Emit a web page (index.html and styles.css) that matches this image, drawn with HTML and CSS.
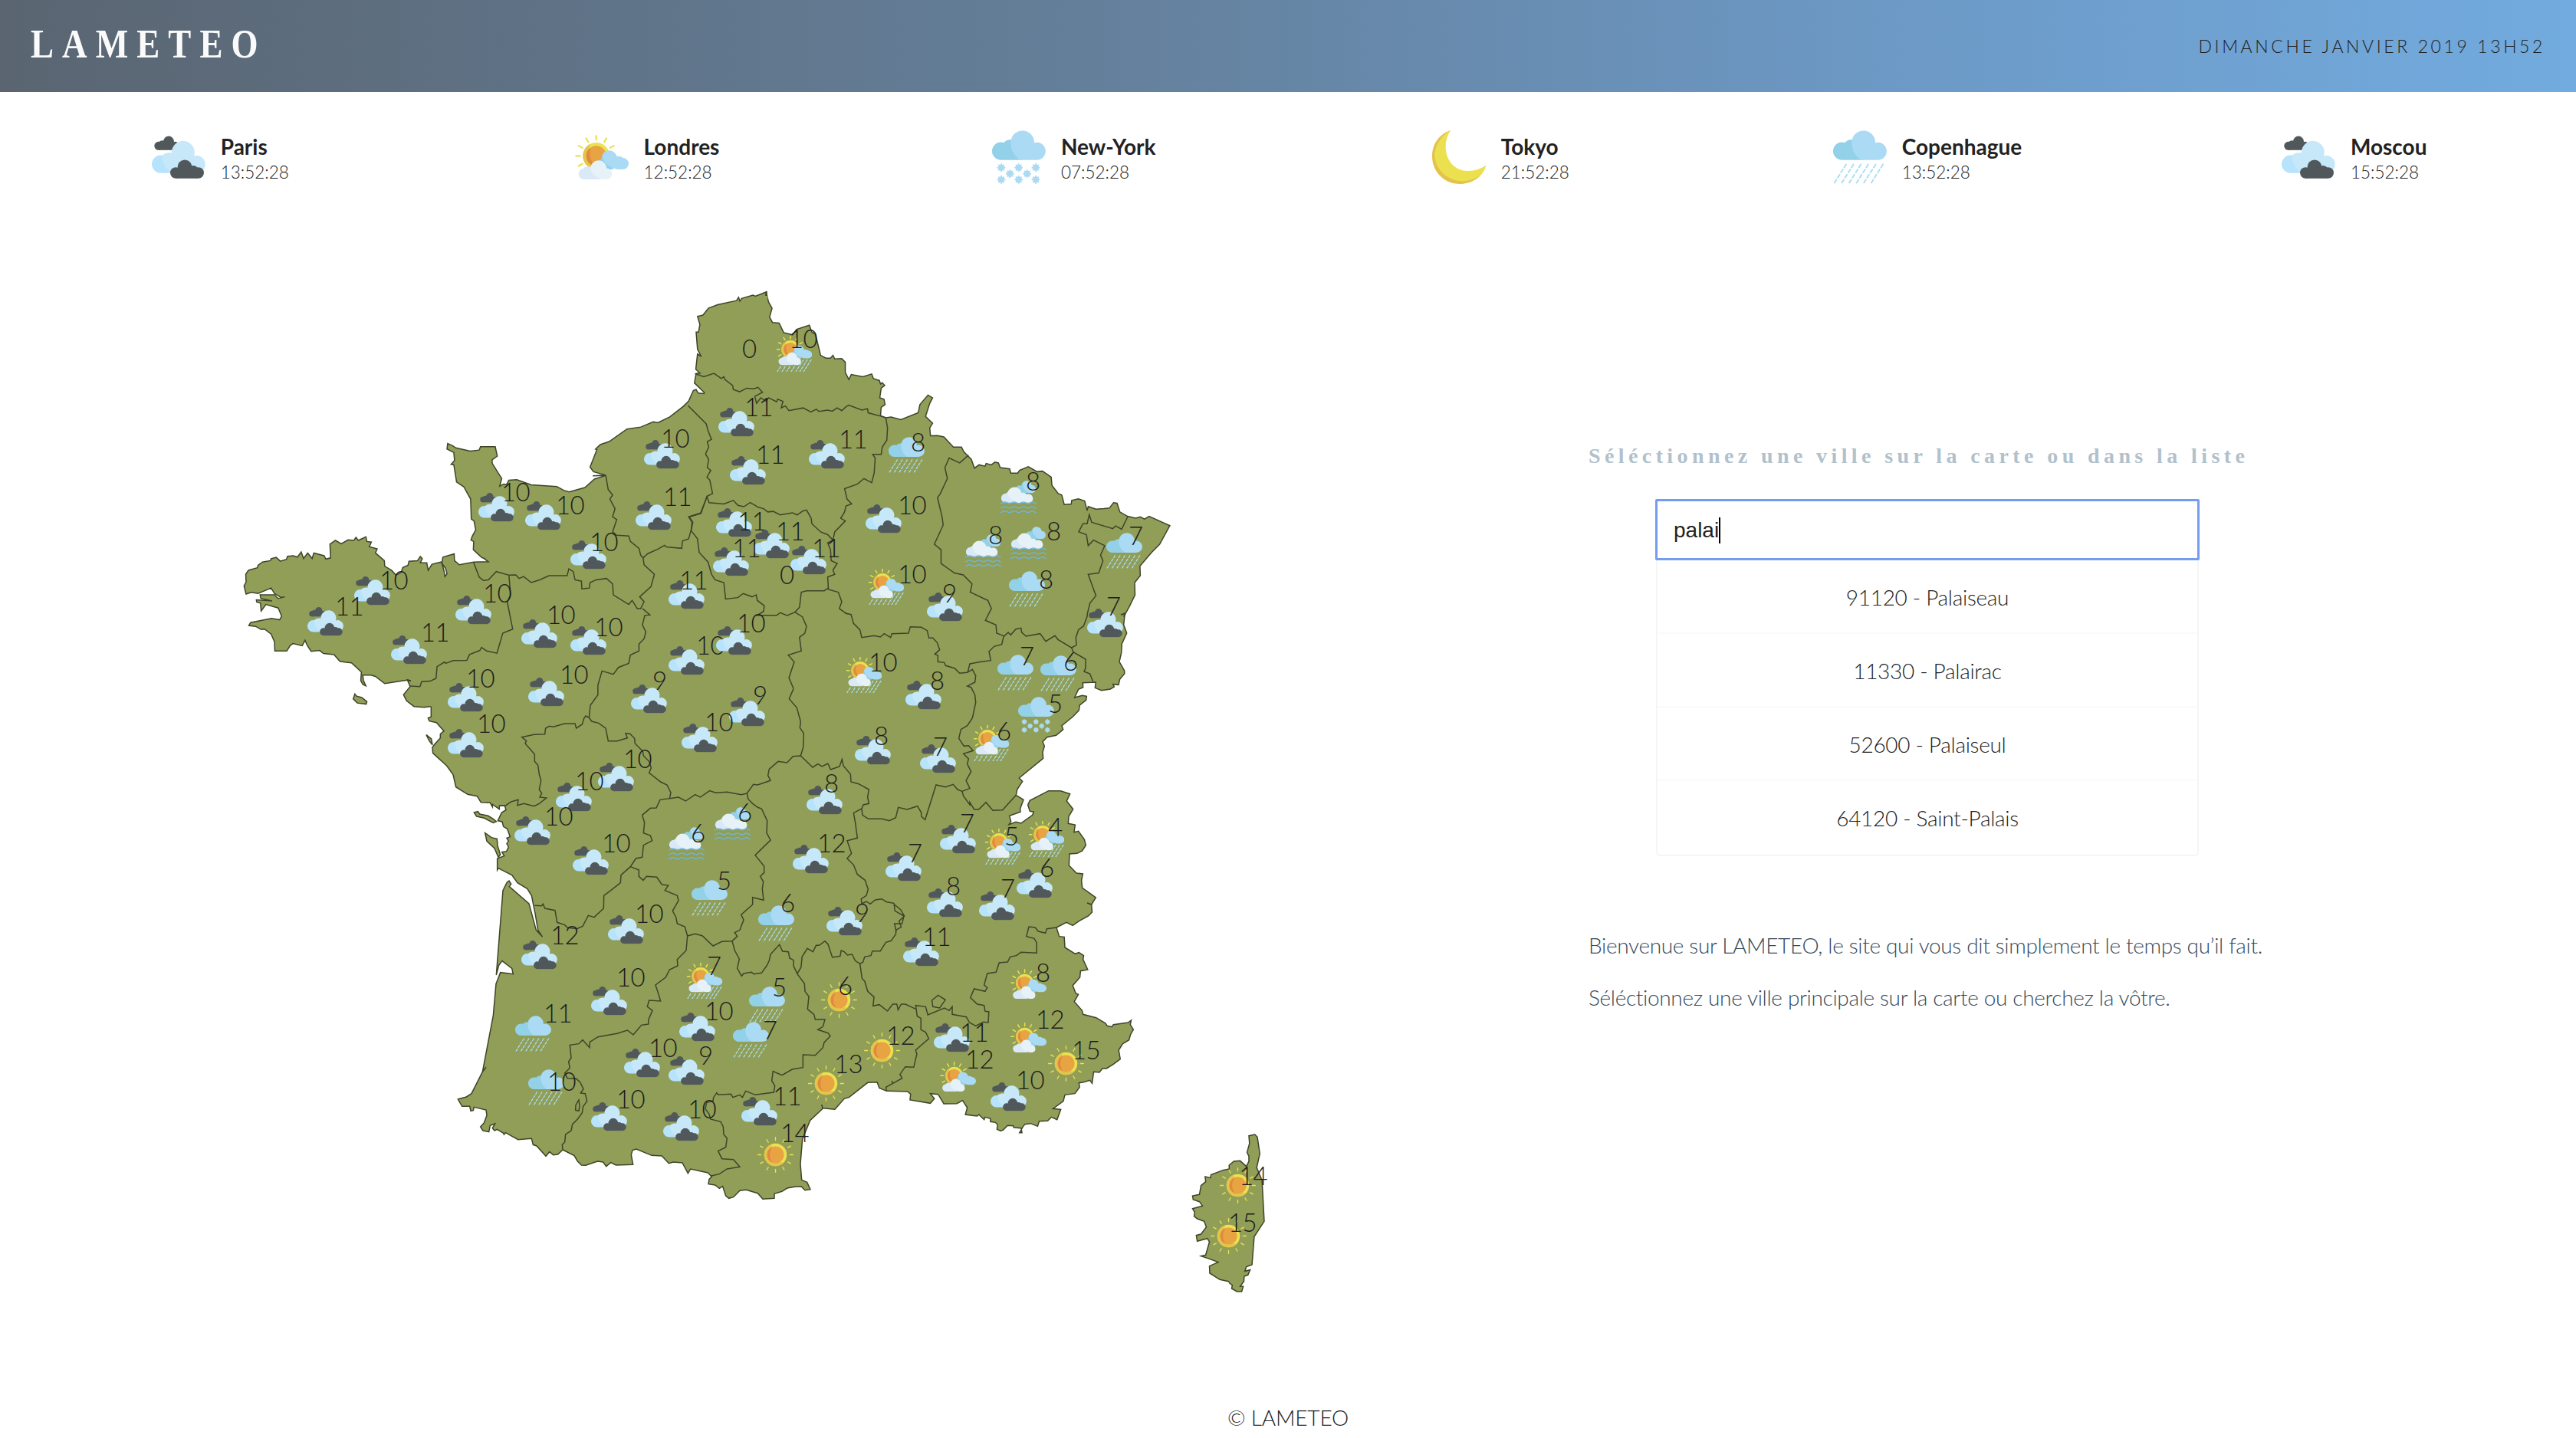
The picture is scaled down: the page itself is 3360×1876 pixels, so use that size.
FILE: index.html
```html
<!DOCTYPE html>
<html lang="fr">
<head>
<meta charset="utf-8">
<title>LAMETEO</title>
<link rel="stylesheet" href="styles.css">
</head>
<body>
<svg class="sprite" aria-hidden="true">
  <symbol id="clouds" viewBox="0 0 70 70">
    <g fill="#51585b"><circle cx="22" cy="14.6" r="7"/><circle cx="8.8" cy="20.3" r="5.5"/><circle cx="13.5" cy="18.5" r="5.3"/><circle cx="30.5" cy="20.3" r="5.5"/><path d="M8.8 17H30v8.8H8.8z"/></g>
    <path fill="#b7e3fd" d="M11.5 32.6c3 0 8 2 12 6L28 55.7H11.5a11.5 11.5 0 0 1 0-23.1z"/>
    <path fill="#c6e8f9" d="M13.3 33C16 30 21 28.4 26 29.5A14.9 14.9 0 1 1 55 33.400A11.4 11.4 0 1 1 58.500 55.700H25.500C18 50 13.500 42 13.300 33Z"/>
    <g fill="#51585b"><circle cx="43" cy="47.8" r="9.4"/><circle cx="31.300" cy="55.500" r="7.300"/><circle cx="54" cy="53" r="7"/><circle cx="60.700" cy="55.500" r="7.300"/><path d="M31.300 50H60v12.800H31.300z"/></g>
  </symbol>
  <symbol id="bluecloud" viewBox="0 0 70 70">
    <path fill="#93d1e9" d="M11.500 15.500c1.500 0 3 .2 4 .6C18 12.500 22 11.500 26 12.500L40 38.700H11.500a11.600 11.600 0 0 1 0-23.200z"/>
    <path fill="#abdbf4" d="M24.400 15.300A15.300 15.300 0 1 1 55 16.200A11.500 11.500 0 1 1 58.400 38.700H36.500C28 33 24.400 25 24.400 15.300Z"/>
  </symbol>
  <symbol id="rain" viewBox="0 0 70 70">
    <use href="#bluecloud"/>
    <path class="drops" d="M17 44.500L1.500 69M26.600 44.500L11.100 69M36.200 44.500L20.700 69M45.800 44.500L30.300 69M55.400 44.500L39.900 69M65 44.500L49.500 69"/>
  </symbol>
  <symbol id="flake" viewBox="-6 -6 12 12"><circle r="3.900"/><path stroke="#abdbf4" stroke-width="1.900" d="M0-5.400V5.400M-5.400 0H5.400M-3.700-3.700L3.700 3.700M3.700-3.700L-3.700 3.700"/></symbol>
  <symbol id="snow" viewBox="0 0 70 70">
    <use href="#bluecloud"/>
    <g fill="#abdbf4"><use href="#flake" x="6" y="42.700" width="12" height="12"/><use href="#flake" x="28.700" y="42.700" width="12" height="12"/><use href="#flake" x="51" y="42.700" width="12" height="12"/><use href="#flake" x="17.300" y="50.700" width="12" height="12"/><use href="#flake" x="39.700" y="50.700" width="12" height="12"/><use href="#flake" x="6" y="58.300" width="12" height="12"/><use href="#flake" x="28.700" y="58.300" width="12" height="12"/><use href="#flake" x="51" y="58.300" width="12" height="12"/></g>
  </symbol>
  <symbol id="partsun" viewBox="0 0 70 70">
    <path stroke="#ebe151" stroke-width="2.200" stroke-linecap="round" d="M27.700 7v5.500M1.300 33.300h5.500M14.500 10.400l2.800 4.800M40.900 10.400l-2.800 4.800M4.800 20.100l4.800 2.800M50.600 20.100l-4.800 2.800M4.800 46.500l4.800-2.800"/>
    <circle cx="27.700" cy="33.300" r="17.300" fill="#ebe151"/>
    <path fill="#e3c54a" d="M20 17.800a17.300 17.300 0 0 0 9 32.800C18 44 14 30 20 17.800z"/>
    <circle cx="27.700" cy="33.300" r="13" fill="#e8a343"/>
    <path fill="#e08a40" d="M20.500 22.500A13 13 0 0 0 26 46.200C20 40 17.500 31 20.500 22.500z"/>
    <path fill="#93d1e9" d="M36 31.500a10 10 0 0 1 6-5L50 51H36c-8 0-8-12-2-13z"/>
    <path fill="#abdbf4" d="M35.500 33A9.900 9.900 0 0 1 54.500 34C58 33.400 61 34.500 62.500 36A7.500 7.500 0 0 1 62.500 51H55C44 48 36 42 35.500 33Z"/>
    <path fill="#d9e9f7" d="M11.700 49.700c.7-2.300 5-3.400 9-2L34 64H12a7.100 7.100 0 0 1-.3-14.300z"/>
    <path fill="#e6f1f8" d="M20.200 50A10.500 10.500 0 0 1 41.200 49.600A7.300 7.300 0 0 1 42.700 64H37C27 62 21 57 20.200 50Z"/>
  </symbol>
  <symbol id="sunrain" viewBox="0 0 70 70">
    <use href="#partsun" x="-1" y="-7" width="70" height="70"/>
    <path class="drops" d="M7.500 60L1.500 69.500M16.500 60L10.500 69.500M25.500 60L19.500 69.500M34.500 60L28.500 69.500M52 46.800L37.500 69.500M59.500 46.800L45 69.500M67 46.800L52.500 69.500"/>
  </symbol>
  <symbol id="fog" viewBox="0 0 70 70">
    <path fill="#93d1e9" d="M30 16c0-6 7-8 10-6 2-5 5-8 9-9.500L60 24H36z"/>
    <path fill="#abdbf4" d="M43 5A9.500 9.500 0 0 1 60.500 8.500A7.700 7.700 0 0 1 61 24H56C48 20 43 14 43 5Z"/>
    <path fill="#d9e9f7" d="M10.500 25c2-3 6-3 9-2L44 43H10a9 9 0 0 1 .5-18z"/>
    <path fill="#e6f1f8" d="M13.500 24A14 14 0 0 1 41 24C45 22.500 49 24 50 26.500C58 24.500 63 29 63 35C63 40 59 43 55 43H34C23 40 15 34 13.500 24Z"/>
    <path fill="none" stroke="#6fb6dd" stroke-width="2" d="M0 44.500c3 0 5-3 8.500-3s5.500 3 9 3 5.500-3 9-3 5.500 3 9 3 5.500-3 9-3 5.500 3 9 3 5.500-3 8.500-3 4 3 7.500 3M0 53.500c3 0 5-3 8.500-3s5.500 3 9 3 5.500-3 9-3 5.500 3 9 3 5.500-3 9-3 5.500 3 9 3 5.500-3 8.500-3 4 3 7.500 3M0 62c3 0 5-3 8.500-3s5.500 3 9 3 5.500-3 9-3 5.500 3 9 3 5.500-3 9-3 5.500 3 9 3 5.500-3 8.500-3 4 3 7.500 3"/>
  </symbol>
  <symbol id="sun" viewBox="0 0 70 70">
    <path stroke="#ebe151" stroke-width="2" stroke-linecap="round" d="M35 1v6M35 63v6M1 35h6M63 35h6M18 5.600l3 5.200M49 59.200l3 5.200M5.600 18l5.200 3M59.200 49l5.200 3M5.600 52l5.200-3M59.200 21l5.200-3M18 64.400l3-5.200M49 10.800l3-5.200"/>
    <circle cx="35" cy="35" r="22" fill="#ebe151"/>
    <path fill="#e3c54a" d="M28 14.200A22 22 0 1 0 52 49C40 53 24 42 28 14.200z"/>
    <circle cx="35" cy="35" r="16.500" fill="#e8a343"/>
    <path fill="#e08a40" d="M29 19.700a16.500 16.500 0 0 0 0 30.600C22.500 41 22.500 29 29 19.700z"/>
  </symbol>
  <symbol id="moon" viewBox="0 0 70 70">
    <path fill="#e4c34b" d="M24 0C9 5 0 18 0 34C0 54 16 70 36 70C52 70 66 61 70 46C40 66 10 50 8 20z"/>
    <path fill="#ebe14f" d="M24 0C13 6 3 20 3.500 34C6 58 28 68 44 66C58 64 68 57 70 46C64 50 56 53 47 53C20 53 10 22 24 0Z"/>
  </symbol>
</svg>

<header class="topbar">
  <h1 class="logo">LAMETEO</h1>
  <time class="date">DIMANCHE JANVIER 2019 13H52</time>
</header>

<section class="cities">
  <div class="city"><svg class="city-icon"><use href="#clouds"/></svg><div><div class="city-name">Paris</div><div class="city-time">13:52:28</div></div></div>
  <div class="city"><svg class="city-icon"><use href="#partsun"/></svg><div><div class="city-name">Londres</div><div class="city-time">12:52:28</div></div></div>
  <div class="city"><svg class="city-icon"><use href="#snow"/></svg><div><div class="city-name">New-York</div><div class="city-time">07:52:28</div></div></div>
  <div class="city"><svg class="city-icon"><use href="#moon"/></svg><div><div class="city-name">Tokyo</div><div class="city-time">21:52:28</div></div></div>
  <div class="city"><svg class="city-icon"><use href="#rain"/></svg><div><div class="city-name">Copenhague</div><div class="city-time">13:52:28</div></div></div>
  <div class="city"><svg class="city-icon"><use href="#clouds"/></svg><div><div class="city-name">Moscou</div><div class="city-time">15:52:28</div></div></div>
</section>

<main class="content">
  <svg class="map" viewBox="0 280 1680 1530">
    <g class="land">
      <path transform="matrix(.4464 0 0 .35714 300 360)" d="M518 1476L452 1489 425 1463 412 1458 388 1458 390 1478 397 1497 388 1492 382 1478 384 1447 355 1413 339 1411 321 1408 304 1383 273 1379 262 1368 237 1371 226 1350 219 1331 211 1351 184 1343 176 1350 166 1370 131 1370 130 1336 120 1308 101 1290 90 1291 75 1280 55 1277 60 1266 121 1251 145 1256 151 1243 141 1213 105 1200 91 1224 89 1195 78 1191 77 1183 123 1187 90 1178 88 1165 130 1165 140 1178 160 1172 150 1175 130 1160 120 1140 82 1160 62 1156 47 1162 41 1132 47 1118 46 1090 54 1075 80 1066 82 1057 95 1045 118 1040 120 1033 135 1028 147 1042 165 1035 168 1024 185 1022 197 1027 208 1008 215 1032 227 1012 240 1032 245 1012 275 1022 280 1034 294 1030 292 980 308 966 325 978 345 964 362 966 368 955 375 966 397 953 400 970 413 972 407 989 430 997 425 1012 451 1040 452 1060 472 1075 485 1093 500 1083 505 1065 520 1057 523 1042 548 1040 556 1025 562 1033 556 1048 575 1048 579 1075 590 1053 617 1045 620 1053 625 1075 628 1098 634 1088 630 1068 619 1050 622 1027 655 1015 656 1040 670 1055 712 1045 755 1044 740 1030 747 1035 735 1028 711 1000 712 970 704 965 708 950 718 928 713 895 705 888 703 815 683 770 662 753 654 690 646 688 656 674 654 645 634 632 636 612 650 620 660 628 702 640 728 636 732 624 775 624 781 658 766 672 766 684 794 740 788 768 800 760 808 762 815 746 838 744 880 763 955 769 975 783 991 789 1037 773 1065 742 1098 729 1060 730 1098 728 1062 715 1052 698 1072 635 1068 633 1082 616 1108 605 1160 559 1200 552 1237 533 1250 536 1285 515 1324 477 1340 457 1354 418 1362 415 1368 428 1385 430 1386 426 1357 391 1362 356 1373 355 1361 341 1366 285 1377 294 1366 268 1362 205 1369 205 1373 177 1366 148 1382 143 1398 118 1425 105 1480 90 1486 78 1490 92 1495 82 1528 70 1535 74 1568 58 1456 1792Z"/>
      <path transform="matrix(.33333 0 0 .33333 560 860)" d="M-86 81L-75 107-101 139-89 163-60 185-20 188 2 185 7 187 7 226-5 230 0 242 28 248 57 281 43 293 43 308 20 334 12 345 14 368 68 417 93 452 104 500 150 529 187 536 202 560 238 562 247 578 247 568 274 587 274 573 295 573 300 590 283 600 268 632 285 636 290 655 305 664 316 695 303 700 310 712 303 722 310 735 302 752 284 755 293 770 266 780 266 825 270 818 323 845 345 875 383 898 400 925 415 1000 425 1060 443 1087 418 1060 390 957 313 890 320 880 312 867 304 873 288 905 262 1236 272 1198 285 1181 323 1210 328 1232 278 1226 272 1242 261 1270 250 1395 208 1615 1170 420Z"/>
      <path transform="matrix(.33333 0 0 .33333 560 1180)" d="M208 655L165 740 145 753 112 762 128 790 158 790 162 808 172 806 175 793 222 804 225 825 214 855 200 870 210 885 233 890 238 865 257 858 247 875 255 885 265 880 290 895 292 900 298 893 347 920 400 916 406 940 420 945 456 985 470 968 485 980 503 978 522 960 567 983 580 1005 595 1020 612 1021 658 1005 680 1008 692 1025 710 1010 730 1020 797 1018 790 980 795 962 810 957 870 982 910 984 937 1013 955 1008 990 1011 1012 1052 1022 1035 1090 1050 1105 1065 1095 1075 1092 1094 1118 1098 1135 1111 1148 1103 1160 1140 1172 1150 1190 1145 1215 1120 1240 1117 1285 1130 1305 1153 1350 1150 1350 1132 1380 1123 1400 1110 1430 1105 1455 1103 1470 1118 1491 1115 1478 1087 1457 1078 1452 1015 1460 918 1490 845 1540 798 1170-540Z"/>
      <path transform="matrix(.40816 0 0 .33333 1040 1180)" d="M81 797L120 802 150 760 165 755 225 697 255 695 262 718 285 730 352 732 362 742 360 765 425 778 438 760 425 740 450 743 468 780 510 779 528 767 543 795 537 822 575 828 580 822 597 842 600 832 617 838 617 850 633 853 640 862 638 880 650 886 658 882 672 865 690 866 692 873 715 875 718 893 710 893 720 872 727 860 745 857 768 868 773 848 800 847 812 832 830 842 842 802 817 799 850 770 855 745 887 740 902 715 900 698 915 695 935 688 942 700 947 655 965 657 975 642 988 642 1010 625 1032 605 1027 570 1040 545 1060 530 1065 508 1074 490 1064 470 1067 453 1057 462 1010 470 1005 479 990 475 985 465 955 443 913 430 910 415 885 380 898 352 890 348 880 317 903 285 905 260 928 255 913 215 915 200 900 188 888 193 855 168 853 127 837 125 828 90 860 70 880 82 900 65 930 45 942 30 940 0-220-540Z"/>
      <path transform="matrix(.33333 0 0 .33333 1050 800)" d="M1121 1140L1138 1113 1120 1100 1085 1075 1082 1045 1087 1020 1062 1017 1033 987 1035 942 1065 940 1085 930 1099 908 1093 885 1070 853 1053 857 1057 828 1030 823 1032 795 1049 767 1024 735 1037 707 1000 695 953 695 880 733 872 750 880 775 895 777 890 790 845 822 825 817 798 827 806 815 800 793 843 778 842 765 855 730 826 712 830 690 851 658 838 645 932 568 930 545 937 520 930 503 947 485 983 478 1010 455 1005 440 1048 405 1072 380 1075 360 1100 340 1102 325 1085 322 1055 330 1070 298 1088 290 1087 272 1138 270 1135 292 1160 302 1195 297 1210 288 1205 278 1227 280 1232 258 1250 237 1250 225 1230 190 1238 155 1240 120 1259 78 1247 45 1252 0-300 600Z"/>
      <path transform="matrix(.45918 0 0 .35714 850 360)" d="M1344 1232L1341 1245 1358 1205 1373 1165 1372 1120 1388 1095 1387 1060 1420 1010 1443 980 1472 912 1413 878 1400 888 1388 880 1375 885 1352 878 1330 862 1322 830 1312 828 1300 848 1285 850 1262 852 1240 842 1237 857 1230 822 1212 814 1193 820 1192 833 1172 835 1165 800 1155 795 1137 765 1135 735 1110 713 1095 715 1070 697 1045 710 1040 720 1020 720 1017 705 990 700 985 683 975 680 965 690 950 685 947 695 930 690 917 702 908 670 887 643 880 625 857 625 830 588 812 583 792 584 790 555 798 538 778 513 790 465 798 445 785 435 762 470 757 500 708 525 680 515 665 518 650 510 652 480 663 470 660 450 648 445 652 410 662 400 655 390 650 395 647 382 630 375 625 358 600 368 567 360 560 378 550 352 550 315 540 302 520 303 515 290 508 300 495 300 480 290 470 238 465 213 455 205 448 180 412 195 400 215 375 207 362 172 343 170 335 150 342 118 332 95 325 58 218 1792Z"/>
      <path transform="matrix(.40816 0 0 .33333 1040 1180)" d="M1443 905L1462 900 1470 910 1478 975 1468 1030 1485 1080 1492 1240 1460 1300 1453 1410 1435 1418 1430 1435 1447 1430 1440 1450 1428 1455 1427 1475 1415 1495 1425 1495 1420 1515 1405 1515 1388 1503 1390 1490 1382 1483 1378 1475 1350 1468 1318 1443 1317 1415 1345 1400 1312 1385 1290 1376 1305 1372 1317 1320 1310 1307 1278 1318 1275 1295 1290 1290 1307 1262 1300 1240 1278 1230 1268 1220 1270 1205 1263 1190 1295 1180 1285 1163 1265 1155 1263 1140 1285 1135 1290 1100 1305 1085 1303 1065 1320 1070 1322 1058 1360 1040 1380 1035 1380 1020 1395 1005 1415 1003 1435 1025 1443 1005 1443 985 1437 970 1445 935Z"/>
      <path transform="matrix(.33333 0 0 .33333 560 860)" d="M175 600L190 596 197 606 230 613 250 625 262 635 250 640 215 622 185 615ZM218 680L243 698 265 703 267 730 278 765 270 775 255 740 225 712ZM-12 296L8 312 12 335 0 320Z"/>
      <path transform="matrix(.4464 0 0 .35714 300 360)" d="M365 1527L370 1535 385 1540 400 1555 398 1564 372 1560 360 1545Z"/>
    </g>
    <path class="seams" d="M536 888L950 1000M635 1393L950 1000 1072 1441M1418 1178L950 1000 1462 802M999 386L950 1000"/>
    <g class="borders">
      <g transform="matrix(.45918 0 0 .35714 850 360)">
        <path d="M123 357L148 368 177 356 198 375 205 368 208 378 230 400 232 415 250 423 270 410 290 412 302 407 315 425 293 440 298 465 310 445 325 458 332 445 355 460 358 450 373 458 368 482 380 475 390 492 430 482 452 497 468 487 475 495 500 490 513 494 527 482 540 492 552 478 560 472 597 490 613 485 615 500 650 512"/>
        <path d="M103 473L155 540 160 565 170 597 158 605 162 625 153 650 162 670 158 700 168 710 157 735 165 745 173 795 157 805 163 828 205 833 232 820 245 838 262 843 280 828 303 845 318 850 330 862 345 860 365 873 400 865 413 873 430 858 440 855 453 885 455 905 480 935 500 945 515 965"/>
        <path d="M650 512L665 518 670 555 668 600 655 625 652 652 628 652 635 665 632 720 625 755 603 740 585 760 548 777 555 815 568 833 552 840 548 862 537 885 550 895 520 935 515 965 500 975 508 1000 510 1040 527 1050 515 1075 520 1090 500 1100 502 1145 530 1155 540 1190 533 1215 555 1235"/>
        <path d="M157 805L140 868 107 880 117 900 112 930 130 960 135 1010 160 1045 170 1090 180 1110 205 1120 210 1180 245 1175 260 1160 285 1172 297 1165 300 1185 320 1205 318 1225 300 1240 355 1240 365 1230 385 1240 407 1228 420 1210 425 1155 440 1150 490 1150 502 1140"/>
        <path d="M407 1228L428 1245 440 1280 435 1305 420 1320 425 1370 388 1385 405 1410 390 1468 403 1508"/>
        <path d="M900 655L875 683 845 665 833 700 840 740 820 795 812 810 825 880 828 910 803 980 822 1000 822 1050 860 1085 885 1092 910 1125 905 1155 955 1185 965 1215 948 1258 978 1275 980 1305 1000 1315"/>
        <path d="M1238 1232L1245 1195 1262 1168 1240 1090 1270 1085 1282 1040 1275 1020 1287 985 1255 965 1240 985 1235 945 1213 935 1225 905 1237 905 1243 872 1250 900 1310 923 1318 913 1335 925 1352 880"/>
      </g>
      <g transform="matrix(.4464 0 0 .35714 300 360)">
        <path d="M1348 925L1340 960 1322 968 1320 995 1275 990 1270 984 1250 998 1220 1015 1207 1030M1392 812L1375 866 1340 880 1350 900 1348 925"/>
        <path d="M1098 729L1105 780 1118 800 1110 815 1125 850 1118 880 1130 890 1118 935 1130 947 1165 950 1170 970 1195 995 1200 1020 1207 1030 1210 1055 1240 1090 1230 1135 1197 1172 1210 1190 1200 1215 1190 1215 1175 1185 1165 1200 1120 1165 1118 1125 1100 1105 1070 1110 1052 1120 1050 1140 1028 1143 1027 1115 1008 1110 1003 1080 990 1070 985 1095 932 1095 905 1110 880 1120 858 1098 845 1105 835 1092 815 1093 778 1080 755 1110 740 1112 728 1100 712 1047"/>
        <path d="M815 1093L820 1165 810 1190 826 1290 797 1305 780 1378 750 1370 735 1357 730 1368 700 1383 692 1404 652 1405 630 1415 627 1410 605 1427 602 1470 585 1480 560 1482 555 1500 525 1498"/>
        <path d="M1205 1215L1227 1238 1212 1240 1205 1275 1215 1300 1210 1325 1195 1345 1195 1370 1170 1385 1165 1415 1135 1430 1120 1455 1087 1443 1075 1495 1075 1530 1053 1568 1049 1616"/>
      </g>
      <g transform="matrix(.33333 0 0 .33333 560 860)">
        <path d="M625 228L612 222 605 232 598 255 575 270 570 252 530 252 485 265 470 262 455 270 452 293 410 295 362 305 380 320 375 330 412 372 412 400 425 415 430 450 437 475 430 510 440 525 432 540 458 543 430 565 410 575 370 565 345 572 348 550 320 558 300 572 275 573"/>
        <path d="M625 228L635 243 662 250 690 270 700 320 735 320 775 308 768 290 785 292 803 310 805 330 835 360 838 378 860 400 868 425 860 445 905 480 930 492 945 522 940 545 903 550 888 582 865 583 833 610 842 640 838 680 865 690 872 710 838 728 833 775 808 780 787 812 750 845 748 875 710 905 683 925 682 975 645 1010 622 1003 600 1045 577 1055 540 1050 530 1040 500 1030 492 983 452 975 445 958 440 965 413 964"/>
        <path d="M940 545L975 540 1003 555 1040 530 1060 540 1097 515 1120 523 1165 520 1220 530 1243 525 1268 490 1285 492 1335 475 1325 455 1330 430 1365 400 1400 405 1423 380 1453 378 1500 423 1520 410 1537 420 1560 408"/>
        <path d="M1425 116L1408 155 1438 190 1453 245 1450 268 1465 290 1463 345 1453 378"/>
        <path d="M787 812L820 825 820 850 837 865 850 850 890 853 910 882 935 885 922 905 970 925 975 945 952 985 965 1010 970 1035 1000 1047 1010 1083 1040 1075 1068 1082 1110 1122 1145 1105 1185 1103 1205 1085 1195 1070 1215 1060 1230 1020 1220 1000 1265 960 1265 932 1308 943 1303 900 1307 870 1295 850 1310 835 1310 810 1275 767 1335 708 1320 680 1322 632 1300 585 1285 580 1265 565 1248 548 1243 525"/>
      </g>
      <g transform="matrix(.33333 0 0 .33333 560 1180)">
        <path d="M1010 123L1005 180 970 215 972 240 940 255 925 285 885 315 895 345 905 378 860 375 853 400 873 415 858 450 857 468 830 472 798 510 775 492 735 505 660 518 628 538 627 560 600 530 585 545 550 550 555 600 545 615 550 640 530 660 540 680 575 682 590 695 603 722 592 738 610 740 617 770 602 790 598 815 580 840 560 860 555 885 533 900 530 930 520 940 522 960M585 765L573 785 572 805 585 808 588 788Z"/>
        <path d="M1185 143L1195 180 1213 213 1205 250 1222 280 1230 270 1260 265 1270 272 1300 268 1320 240 1330 220 1335 195 1370 157 1382 183 1405 185 1410 210 1425 218 1425 240 1440 272 1468 310 1470 340 1485 360 1480 410 1505 430 1510 450 1548 450 1540 478 1520 490 1560 503 1569 515 1545 540 1540 560 1510 590 1462 588 1462 638 1420 645 1380 668 1345 653 1340 690 1352 710 1348 735 1275 745 1238 730 1225 755 1215 745 1188 755 1180 742 1130 745 1125 737 1112 755 1110 770 1085 775 1080 800 1095 820 1100 840 1140 850 1150 870 1152 900 1165 915 1160 950 1130 965 1145 995 1190 998 1215 1027 1165 1035 1135 1055 1100 1063"/>
      </g>
      <g transform="matrix(.40816 0 0 .33333 1040 1180)">
        <path d="M0 270L12 245 15 205 32 172 50 185 60 160 70 160 88 143 98 155 112 207 137 202 140 180 150 185 160 198 175 195 185 220 200 232 210 225 215 205 235 200 240 182 265 182 283 148 300 142 315 115 315 100 332 88 325 65 342 45 330 20 310 0"/>
        <path d="M200 232L207 290 215 300 225 340 245 362 242 397 262 392 288 417 305 390 318 390 322 412 332 390 345 390 380 410 383 437 395 445 395 490 410 500 420 525 378 570 382 585 372 637 345 635 328 665 335 680 283 715 285 730M302 690L305 700"/>
        <path d="M380 410L378 395 410 400 417 432 470 405 485 415 495 400 495 430 540 440 550 462 570 475 595 460 610 462 612 420 600 418 597 395 575 390 553 365 565 330 600 340 607 325 597 315 607 270 635 265 645 228 672 225 680 205 700 200 715 187 765 190 765 150 757 133 732 125 740 87 760 90 770 105 793 112 797 95 828 90M430 375L450 355 473 373 455 405 433 400Z"/>
      </g>
      <g transform="matrix(.33333 0 0 .33333 1050 800)">
        <path d="M222 1137L220 1118 240 1105 247 1080 235 1045 205 1022 190 985 165 960 182 940 165 890 205 880 197 820 190 782 222 765 228 750 250 745 245 720 250 690 210 668 180 660 178 630 150 597 145 572 135 600 100 612 90 588"/>
        <path d="M222 1137L240 1128 255 1138 275 1122 300 1118 320 1130 348 1135 352 1165 387 1185 380 1215 350 1215 357 1245"/>
        <path d="M222 765L225 790 248 805 300 805 330 812 355 800 365 760 400 768 440 755 455 780 455 795 470 808 513 672 550 680 580 670 597 690 615 697"/>
        <path d="M615 697L620 715 645 750 645 740 662 768 680 768 708 740 735 772 773 770 826 712M615 697L645 685 630 655 650 620 635 590 640 570 620 550 658 538 640 518 622 520 602 490 610 455 635 440 655 410 668 350 665 320 650 290 635 285 665 270 668 245 655 220 635 232 605 235 585 215 550 205 545 193 520 190 520 165 508 160 527 143 517 115 500 97 485 97 478 68 455 55 412 53 405 78 340 80 335 95 310 80 295 93 270 88 222 95 215 65 190 40 180 5 158 0"/>
        <path d="M777 92L770 122 740 130 720 150 727 185 690 190 645 198 637 230M777 92L795 75 805 85 825 62 845 58 848 75 865 90 920 80 942 110 978 88 990 103 1043 135 1050 152 1098 180 1098 215 1092 228 1115 237 1127 268M1043 135L1062 125 1060 95 1070 65 1090 50 1105 10 1104 0"/>
      </g>
    </g>
    <g id="stations"></g>
  </svg>

  <section class="panel">
    <h2 class="panel-title">Séléctionnez une ville sur la carte ou dans la liste</h2>
    <div class="search">
      <div class="search-input">palai<span class="caret"></span></div>
      <ul class="results">
        <li>91120 - Palaiseau</li>
        <li>11330 - Palairac</li>
        <li>52600 - Palaiseul</li>
        <li>64120 - Saint-Palais</li>
      </ul>
    </div>
    <p class="intro">Bienvenue sur LAMETEO, le site qui vous dit simplement le temps qu’il fait.</p>
    <p class="intro">Séléctionnez une ville principale sur la carte ou cherchez la vôtre.</p>
  </section>
</main>

<footer class="footer">© LAMETEO</footer>
<script src="stations.js"></script>
</body>
</html>
```
FILE: styles.css
```css
* { box-sizing: border-box; margin: 0; padding: 0; }

body {
  display: flex;
  flex-direction: column;
  height: 1876px;
  background: #fff;
  color: #222;
  font-family: Lato, sans-serif;
  font-weight: 300;
  font-size: 28px;
}

.sprite { position: absolute; width: 0; height: 0; }
.drops { fill: none; stroke: #a9def0; stroke-width: 1.9; stroke-dasharray: 4.6 3.3; stroke-linecap: round; }

.topbar {
  display: flex;
  justify-content: space-between;
  align-items: center;
  height: 120px;
  padding: 0 40px;
  background: linear-gradient(90deg, #5a6571 0%, #647f9a 42%, #6c98c4 72%, #72abdf 100%);
}
.logo {
  color: #fafafa;
  font-family: "Liberation Serif", serif;
  font-size: 53px;
  font-weight: 700;
  line-height: 60px;
  letter-spacing: 13px;
  padding-bottom: 6px;
  transform: scaleX(.85);
  transform-origin: left;
}
.date { font-size: 23px; letter-spacing: 3.6px; }

.cities {
  display: grid;
  grid-template-columns: repeat(6, 1fr);
  height: 160px;
  padding: 50px 11px 0 9px;
}
.city { display: flex; justify-content: center; gap: 20px; }
.city-icon { width: 70px; height: 70px; }
.city-name { font-size: 28px; font-weight: 700; line-height: 34px; margin-top: 4px; }
.city-time { font-size: 22.500px; line-height: 34px; }

.content { display: grid; grid-template-columns: 1680px 1fr; height: 1530px; }
.map { width: 1680px; height: 1530px; }
.land path { fill: #919e58; }
.land path, .borders path { stroke: #3f4429; stroke-width: 1.5px; vector-effect: non-scaling-stroke; }
.borders path { fill: none; }
.seams { fill: none; stroke: #919e58; stroke-width: 5px; }
.map text { fill: #1c1c1c; font-size: 33px; font-weight: 300; letter-spacing: -.6px; }

.panel { width: 1273px; padding: 299px 0 0 392px; }
.panel-title {
  color: #b1c1cc;
  font-family: "Liberation Serif", serif;
  font-size: 28px;
  font-weight: 700;
  line-height: 32px;
  letter-spacing: 5.4px;
  white-space: nowrap;
}
.search { width: 710px; margin: 40px 0 99px 87px; }
.search-input {
  display: flex;
  align-items: center;
  height: 80px;
  padding: 2px 0 0 21px;
  border: 3px solid #749df0;
  border-radius: 2px;
  font: 400 28px "Liberation Sans", sans-serif;
}
.caret { width: 2px; height: 34px; background: #000; }
.results { margin: 0 1px; border: 2px solid #f5f5f5; border-top: 0; border-radius: 0 0 5px 5px; list-style: none; }
.results li { height: 96px; line-height: 96px; text-align: center; letter-spacing: -.3px; border-bottom: 2px solid #fafafa; }
.results li:last-child { border-bottom: 0; }
.intro { color: #34495a; line-height: 34px; margin-bottom: 34px; letter-spacing: -.33px; white-space: nowrap; }

.footer { height: 66px; line-height: 78px; text-align: center; letter-spacing: -.15px; }
```
FILE: stations.js
```js
// [icon, icon left, icon top, temperature, label left, label baseline]
const stations = [
  ["clouds",624,638,10,658,654],["clouds",685,649,10,729,671],["clouds",744,700,10,773,719],["clouds",840,569,10,866,584],
  ["clouds",829,649,11,869,660],["clouds",462,747,10,499,769],["clouds",401,787,11,441,803],["clouds",594,772,10,634,786],
  ["clouds",510,824,11,553,837],["clouds",680,803,10,717,814],["clouds",744,812,10,779,830],["clouds",872,752,11,890,769],
  ["clouds",872,838,10,912,854],["clouds",937,527,11,975,543],["clouds",952,590,11,990,605],["clouds",1055,569,11,1098,585],
  ["rain",1159,570,8,1190,589],["sunrain",1013,438,10,1033,454],["",0,0,0,970,467],["fog",1305,627,8,1340,640],
  ["fog",1259,697,8,1291,710],["fog",1318,687,8,1367,705],["rain",1443,695,7,1474,711],["rain",1316,745,8,1357,768],
  ["clouds",1129,653,10,1175,671],["clouds",934,658,11,966,692],["clouds",983,686,11,1016,705],["clouds",930,709,11,959,727],
  ["clouds",1031,707,11,1063,727],["",0,0,0,1019,762],["sunrain",1133,742,10,1175,761],["clouds",1209,768,9,1231,786],
  ["clouds",934,812,10,965,825],["clouds",1418,789,7,1445,803],["rain",1301,854,7,1332,868],["rain",1357,855,6,1389,875],
  ["sunrain",1104,857,10,1137,876],["clouds",1181,883,8,1215,900],["clouds",584,886,10,612,897],["clouds",689,879,10,734,892],
  ["clouds",584,946,10,626,956],["clouds",823,888,9,853,900],["clouds",951,905,9,984,919],["clouds",889,939,10,923,954],
  ["clouds",780,990,10,817,1002],["clouds",725,1016,10,754,1031],["clouds",671,1060,10,714,1077],["clouds",747,1099,10,789,1112],
  ["fog",872,1079,6,903,1099],["fog",932,1053,6,964,1072],["rain",902,1148,5,937,1161],["rain",989,1181,6,1020,1190],
  ["clouds",793,1189,10,832,1204],["clouds",680,1222,12,722,1232],["clouds",1115,955,8,1142,972],["clouds",1200,966,7,1219,986],
  ["sunrain",1270,946,6,1302,966],["snow",1328,909,5,1369,930],["clouds",1052,1020,8,1077,1034],["clouds",1226,1071,7,1254,1086],
  ["sunrain",1285,1081,5,1312,1103],["sunrain",1342,1071,4,1369,1091],["clouds",1155,1107,7,1186,1125],["clouds",1034,1097,12,1070,1112],
  ["clouds",1326,1129,6,1358,1144],["clouds",1209,1154,8,1236,1168],["clouds",1277,1158,7,1307,1171],["clouds",1078,1178,9,1117,1203],
  ["clouds",1178,1218,11,1207,1234],["clouds",771,1282,10,808,1287],["sunrain",896,1256,7,924,1272],["rain",977,1287,5,1009,1300],
  ["clouds",886,1316,10,923,1331],["rain",956,1333,7,997,1356],["rain",672,1325,11,713,1334],["rain",689,1395,10,718,1423],
  ["clouds",814,1363,10,850,1379],["clouds",872,1373,9,913,1389],["clouds",771,1433,10,808,1446],["clouds",865,1446,10,901,1459],
  ["clouds",967,1426,11,1012,1442],["sun",988,1483,14,1022,1490],["sun",1071,1281,6,1095,1298],["sun",1127,1347,12,1160,1363],
  ["sun",1054,1390,13,1092,1400],["clouds",1218,1330,11,1256,1359],["partsun",1226,1381,12,1263,1394],["partsun",1318,1260,8,1353,1281],
  ["partsun",1318,1330,12,1355,1342],["sun",1367,1364,15,1402,1382],["clouds",1292,1407,10,1329,1421],["sun",1591,1523,14,1620,1546],
  ["sun",1579,1589,15,1606,1607]
];

document.getElementById("stations").innerHTML = stations.map(([icon, x, y, temp, tx, ty]) =>
  (icon ? `<use href="#${icon}" x="${x}" y="${y}" width="47" height="47"/>` : "") +
  `<text x="${tx - (temp > 9 ? 4 : 2)}" y="${ty}">${temp}</text>`
).join("");
```
